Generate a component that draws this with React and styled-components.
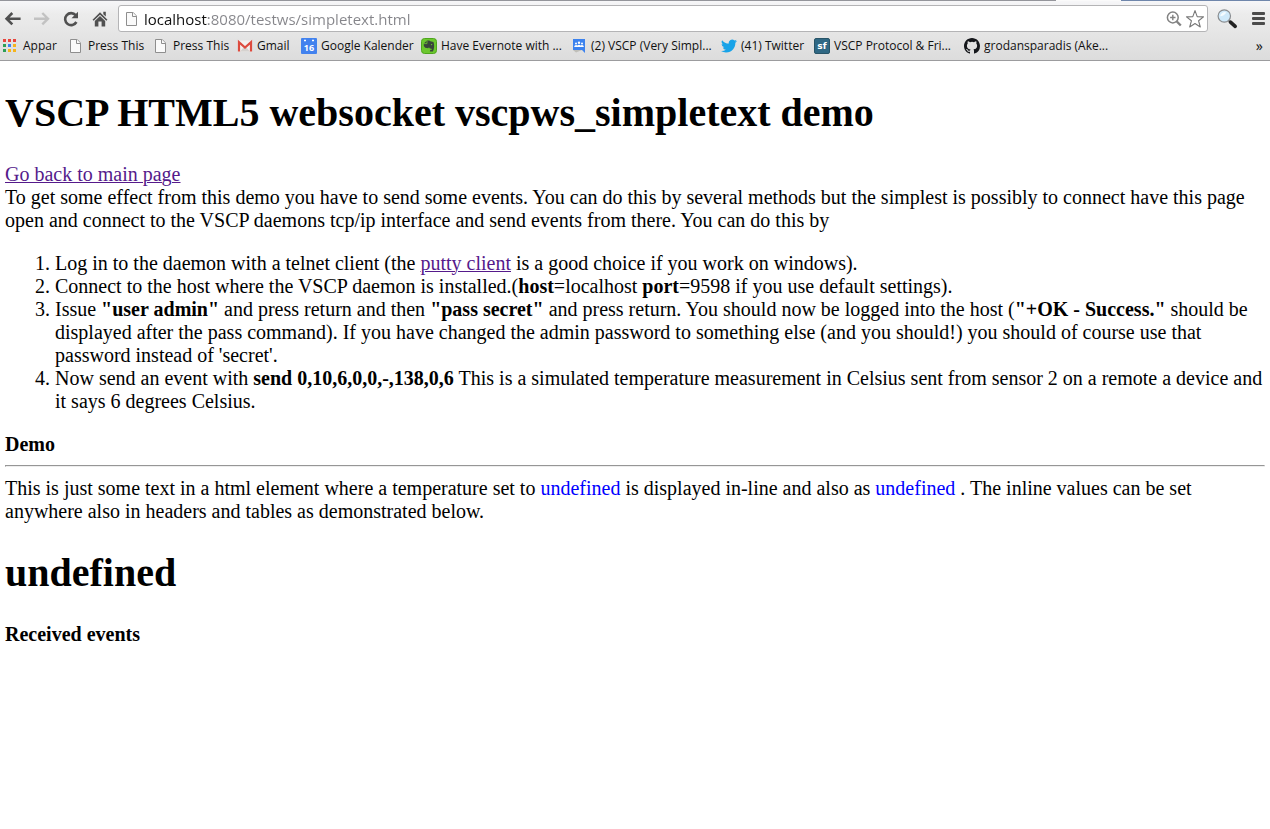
import React from "react";
import styled, { createGlobalStyle } from "styled-components";

const GlobalStyle = createGlobalStyle`
  * { box-sizing: border-box; }
  body {
    margin: 0;
    background: #fff;
    color: #000;
    font-family: "Liberation Serif", "Times New Roman", serif;
    font-size: 20px;
    line-height: 23px;
  }
`;

/* ---------- Browser chrome ---------- */

const Chrome = styled.header`
  background: linear-gradient(#f7f7f9 0, #ececec 14px, #dcdcdc 100%);
  border-bottom: 1px solid #9c9c9e;
  font-family: "Open Sans", "Noto Sans", sans-serif;
`;

const TabEdge = styled.div`
  display: flex;
  height: 1px;
  background: #94959b;

  &::after {
    content: "";
    width: 214px;
    margin-left: auto;
    background: linear-gradient(to right, #fafafa 65px, #6f86ab 65px);
  }
`;

const Toolbar = styled.nav`
  display: flex;
  align-items: center;
  padding: 4px 0 0 3px;
`;

const ToolButton = styled.button`
  display: flex;
  justify-content: center;
  flex: none;
  width: ${(p) => p.$width || 29}px;
  padding: 0;
  border: 0;
  background: none;
`;

const NavButtons = styled.div`
  display: flex;
  width: 115px;
`;

const NavButton = styled(ToolButton)`
  width: 19px;
  margin-right: 10px;
`;

const AddressBar = styled.div`
  display: flex;
  align-items: center;
  flex: 1;
  height: 27px;
  padding: 0 2px 0 5px;
  background: #fff;
  border: 1px solid #b4b4b6;
  border-radius: 3px;
`;

const AddressInput = styled.input`
  flex: 1;
  min-width: 0;
  height: 24px;
  margin-left: 4px;
  padding: 0;
  border: 0;
  outline: 0;
  font: 15px/24px "Open Sans", "Noto Sans", sans-serif;
  background: linear-gradient(to right, #111 64px, #85858a 64px);
  background-clip: text;
  -webkit-background-clip: text;
  -webkit-text-fill-color: transparent;
`;

const BookmarkBar = styled.nav`
  display: flex;
  align-items: center;
  height: 28px;
  padding: 0 7px 0 1px;
`;

const Bookmark = styled.a`
  display: flex;
  align-items: center;
  gap: 4px;
  flex: none;
  width: ${(p) => p.$width}px;
  color: #111;
  font-size: 12px;
  line-height: 16px;
  white-space: nowrap;
  text-decoration: none;

  svg {
    flex: none;
  }
`;

const Overflow = styled.button`
  margin-left: auto;
  padding: 0;
  border: 0;
  background: none;
  color: #222;
  font: 14px/16px "Noto Sans", sans-serif;
`;

/* ---------- Page ---------- */

const Page = styled.main`
  padding: 2px 5px 0;
`;

const Title = styled.h1`
  margin: 27px 0;
  font-size: 40px;
  line-height: 46px;
`;

const Text = styled.p`
  margin: 0;
`;

const PageLink = styled.a`
  color: #551a8b;
  text-decoration-thickness: 1px;
`;

const Steps = styled.ol`
  margin: 20px 0;
  padding-left: 50px;
`;

const Section = styled.h4`
  margin: 20px 0 9px;
  font-size: 20px;
  line-height: 23px;
`;

const Rule = styled.hr`
  margin: 0 0 10px;
  border: 1px solid;
  border-color: #969696 #eee #eee #969696;
`;

const Value = styled.span`
  color: #00f;
`;

/* ---------- Icons ---------- */

const Back = ({ color }) => (
  <svg width="18" height="18" viewBox="0 0 18 18" fill="none" stroke={color} strokeWidth="2.6">
    <path d="M8.3 3 2.6 8.7 8.3 14.4M3.4 8.7h13.2" />
  </svg>
);

const Forward = ({ color }) => (
  <svg width="18" height="18" viewBox="0 0 18 18" fill="none" stroke={color} strokeWidth="2.4">
    <path d="M9.3 3l5.7 5.7L9.3 14.4M14.2 8.7H1" />
  </svg>
);

const Reload = () => (
  <svg width="18" height="18" viewBox="0 0 18 18">
    <path d="M13.7 5.2A6 6 0 1 0 14.4 12" fill="none" stroke="#505050" strokeWidth="2.6" />
    <path d="M16 1.8V8.3H9.5Z" fill="#505050" />
  </svg>
);

const Home = () => (
  <svg width="18" height="18" viewBox="0 0 18 18" fill="#505050">
    <path d="M9 2.2 16.5 9.7 15.3 10.8 9 4.7 2.7 10.8 1.5 9.7Z" />
    <path d="M12.3 1.8h2.5v4.8l-2.5-2.3Z" />
    <path d="M9 6l5.2 5v5.6H10.6v-5H7.4v5H3.8v-5.6Z" />
  </svg>
);

const Doc = () => (
  <svg width="16" height="16" viewBox="0 0 16 16" fill="#fafafa" stroke="#8e8e8e">
    <path d="M2.5 1.5h6.7L12.5 5v9.5h-10Z" />
    <path d="M8.5 1.5v4h4" />
  </svg>
);

const ZoomIn = () => (
  <svg width="18" height="18" viewBox="0 0 18 18" fill="none" stroke="#828282">
    <circle cx="7.8" cy="7.5" r="5.4" strokeWidth="1.5" />
    <path d="M7.8 4.8v5.4M5.1 7.5h5.4" strokeWidth="1.4" />
    <path d="M11.8 11.5l4 4" strokeWidth="2.4" />
  </svg>
);

const Star = () => (
  <svg width="20" height="20" viewBox="0 0 20 20" fill="#fff" stroke="#777" strokeWidth="1.1">
    <path d="M10 1.6l2.2 6 6.3.3-4.9 3.9 1.7 6.2L10 14.5l-5.3 3.5 1.7-6.2L1.5 7.9l6.3-.3Z" strokeLinejoin="round" />
  </svg>
);

const Magnifier = () => (
  <svg width="22" height="22" viewBox="0 0 22 22">
    <path d="M12.5 12.5l3 2.5" stroke="#777" strokeWidth="2" />
    <path d="M14.5 14.2l4.7 4.2" stroke="#222" strokeWidth="3.6" strokeLinecap="round" />
    <circle cx="8.3" cy="8" r="6.2" fill="#cfe9fa" stroke="#8a8d90" strokeWidth="1.2" />
    <path d="M4.2 8.2A4.5 4.5 0 0 1 10.5 4.5Q8 8 4.2 8.2Z" fill="#f4fbff" />
  </svg>
);

const Menu = () => (
  <svg width="14" height="16" viewBox="0 0 14 16" fill="#4b4b4b">
    <rect x="1" y="1" width="13" height="3" rx="1" />
    <rect x="1" y="6" width="13" height="3" rx="1" />
    <rect x="1" y="11" width="13" height="3" rx="1" />
  </svg>
);

const Apps = () => (
  <svg width="18" height="16" viewBox="0 0 18 16">
    {["#e8453c", "#e8453c", "#e8453c", "#2c9f56", "#3b82f0", "#f5b41c", "#2c9f56", "#f5b41c", "#f5b41c"].map((c, i) => (
      <rect key={i} x={2 + (i % 3) * 5} y={1 + Math.floor(i / 3) * 5} width="3" height="3" fill={c} />
    ))}
  </svg>
);

const Gmail = () => (
  <svg width="16" height="16" viewBox="0 0 16 16">
    <path d="M1 2.5h14v11H1Z" fill="#f3f1ef" />
    <path d="M3 13.5 8 8l5 5.5Z" fill="#d5d2cf" />
    <path d="M2 13.5V4.2L8 9.5 14 4.2v9.3" fill="none" stroke="#dd4b3e" strokeWidth="2.2" />
  </svg>
);

const Calendar = () => (
  <svg width="16" height="16" viewBox="0 0 16 16">
    <rect width="16" height="16" rx="1" fill="#4282ee" />
    <path d="M3 2.5h2M11 2.5h2" stroke="#fff" strokeWidth="1.5" />
    <text x="8" y="13" textAnchor="middle" fontFamily="Open Sans, sans-serif" fontSize="9" fontWeight="700" fill="#fff">16</text>
  </svg>
);

const Evernote = () => (
  <svg width="16" height="16" viewBox="0 0 16 16">
    <rect x=".5" y=".5" width="15" height="15" rx="3" fill="#6cc72e" stroke="#4da51c" />
    <path d="M6 2.6 2.8 5.6V8l1.4 1.8 3 .4.8-1 .8 1.2 1.8.4v1.1l-1.3-.1-.5 1.7h3.1c1.5-2.5 1.6-6.8.6-9.4l-3.2-.9-1-.8Z" fill="#39443b" />
    <path d="M6 2.8v2.8H3" fill="none" stroke="#6cc72e" strokeWidth=".8" />
    <circle cx="10.6" cy="6.6" r=".7" fill="#6cc72e" />
  </svg>
);

const Groups = () => (
  <svg width="16" height="16" viewBox="0 0 16 16">
    <path d="M2 1h12v14l-3-3H2Z" fill="#3c82ee" />
    <path d="M2 12h9l-6 2.5Z" fill="#aaa99f" opacity=".6" />
    <g fill="#fff">
      <circle cx="5" cy="5.5" r="1" />
      <circle cx="8" cy="4.8" r="1.2" />
      <circle cx="11" cy="5.5" r="1" />
      <path d="M3.3 9V8q1.7-1.5 3-.5Q8 6 9.7 7.5q1.5-1 3 .5v1Z" />
    </g>
  </svg>
);

const Twitter = () => (
  <svg width="16" height="16" viewBox="0 0 24 24" fill="#18a3e8">
    <path d="M24 4.6a10 10 0 0 1-2.8.8 5 5 0 0 0 2.1-2.7 10 10 0 0 1-3.1 1.2 4.9 4.9 0 0 0-8.4 4.5A14 14 0 0 1 1.7 3.2a4.9 4.9 0 0 0 1.5 6.5 4.9 4.9 0 0 1-2.2-.6 4.9 4.9 0 0 0 3.9 4.9 5 5 0 0 1-2.2.1 4.9 4.9 0 0 0 4.6 3.4A9.9 9.9 0 0 1 0 19.5a14 14 0 0 0 7.5 2.2c9.1 0 14-7.5 14-14v-.6A10 10 0 0 0 24 4.6Z" />
  </svg>
);

const SourceForge = () => (
  <svg width="16" height="16" viewBox="0 0 16 16">
    <rect x=".5" y=".5" width="15" height="15" rx="1.5" fill="#2f6884" stroke="#285468" />
    <text x="8" y="11" textAnchor="middle" fontFamily="DejaVu Sans, sans-serif" fontSize="9" fontWeight="700" fill="#fff">sf</text>
  </svg>
);

const GitHub = () => (
  <svg width="16" height="16" viewBox="0 0 16 16" fill="#15171b">
    <path d="M8 0C3.58 0 0 3.58 0 8c0 3.54 2.29 6.53 5.47 7.59.4.07.55-.17.55-.38 0-.19-.01-.82-.01-1.49-2.01.37-2.53-.49-2.69-.94-.09-.23-.48-.94-.82-1.13-.28-.15-.68-.52-.01-.53.63-.01 1.08.58 1.23.82.72 1.21 1.87.87 2.33.66.07-.52.28-.87.51-1.07-1.78-.2-3.64-.89-3.64-3.95 0-.87.31-1.59.82-2.15-.08-.2-.36-1.02.08-2.12 0 0 .67-.21 2.2.82a7.6 7.6 0 0 1 4 0c1.53-1.04 2.2-.82 2.2-.82.44 1.1.16 1.92.08 2.12.51.56.82 1.27.82 2.15 0 3.07-1.87 3.75-3.65 3.95.29.25.54.73.54 1.48 0 1.07-.01 1.93-.01 2.2 0 .21.15.46.55.38A8 8 0 0 0 16 8c0-4.42-3.58-8-8-8Z" />
  </svg>
);

const bookmarks = [
  { icon: Apps, label: "Appar", width: 67 },
  { icon: Doc, label: "Press This", width: 85 },
  { icon: Doc, label: "Press This", width: 84 },
  { icon: Gmail, label: "Gmail", width: 64 },
  { icon: Calendar, label: "Google Kalender", width: 120 },
  { icon: Evernote, label: "Have Evernote with ...", width: 150 },
  { icon: Groups, label: "(2) VSCP (Very Simpl...", width: 150 },
  { icon: Twitter, label: "(41) Twitter", width: 93 },
  { icon: SourceForge, label: "VSCP Protocol & Fri...", width: 150 },
  { icon: GitHub, label: "grodansparadis (Ake...", width: 150 },
];

export default function App() {
  return (
    <>
      <GlobalStyle />
      <Chrome>
        <TabEdge />
        <Toolbar aria-label="Browser">
          <NavButtons>
            <NavButton aria-label="Back"><Back color="#505050" /></NavButton>
            <NavButton aria-label="Forward"><Forward color="#c2c2c2" /></NavButton>
            <NavButton aria-label="Reload"><Reload /></NavButton>
            <NavButton aria-label="Home"><Home /></NavButton>
          </NavButtons>
          <AddressBar>
            <Doc />
            <AddressInput aria-label="Address" defaultValue="localhost:8080/testws/simpletext.html" />
            <ToolButton $width={22} aria-label="Zoom"><ZoomIn /></ToolButton>
            <ToolButton $width={20} aria-label="Bookmark this page"><Star /></ToolButton>
          </AddressBar>
          <ToolButton $width={38} aria-label="Search"><Magnifier /></ToolButton>
          <ToolButton $width={24} aria-label="Menu"><Menu /></ToolButton>
        </Toolbar>
        <BookmarkBar aria-label="Bookmarks">
          {bookmarks.map(({ icon: Icon, label, width }, i) => (
            <Bookmark key={i} href="#" $width={width}>
              <Icon />
              {label}
            </Bookmark>
          ))}
          <Overflow aria-label="More bookmarks">»</Overflow>
        </BookmarkBar>
      </Chrome>
      <Page>
        <Title>VSCP HTML5 websocket vscpws_simpletext demo</Title>
        <PageLink href="#">Go back to main page</PageLink>
        <Text>
          To get some effect from this demo you have to send some events. You can do this by several methods but the
          simplest is possibly to connect have this page open and connect to the VSCP daemons tcp/ip interface and send
          events from there. You can do this by
        </Text>
        <Steps>
          <li>
            Log in to the daemon with a telnet client (the <PageLink href="#">putty client</PageLink> is a good choice
            if you work on windows).
          </li>
          <li>
            Connect to the host where the VSCP daemon is installed.(<b>host</b>=localhost <b>port</b>=9598 if you use
            default settings).
          </li>
          <li>
            Issue <b>"user admin"</b> and press return and then <b>"pass secret"</b> and press return. You should now
            be logged into the host (<b>"+OK - Success."</b> should be displayed after the pass command). If you have
            changed the admin password to something else (and you should!) you should of course use that password
            instead of 'secret'.
          </li>
          <li>
            Now send an event with <b>send 0,10,6,0,0,-,138,0,6</b> This is a simulated temperature measurement in
            Celsius sent from sensor 2 on a remote a device and it says 6 degrees Celsius.
          </li>
        </Steps>
        <Section>Demo</Section>
        <Rule />
        <Text>
          This is just some text in a html element where a temperature set to <Value>undefined</Value> is displayed
          in-line and also as <Value>undefined</Value> . The inline values can be set anywhere also in headers and
          tables as demonstrated below.
        </Text>
        <Title>undefined</Title>
        <Section>Received events</Section>
      </Page>
    </>
  );
}
